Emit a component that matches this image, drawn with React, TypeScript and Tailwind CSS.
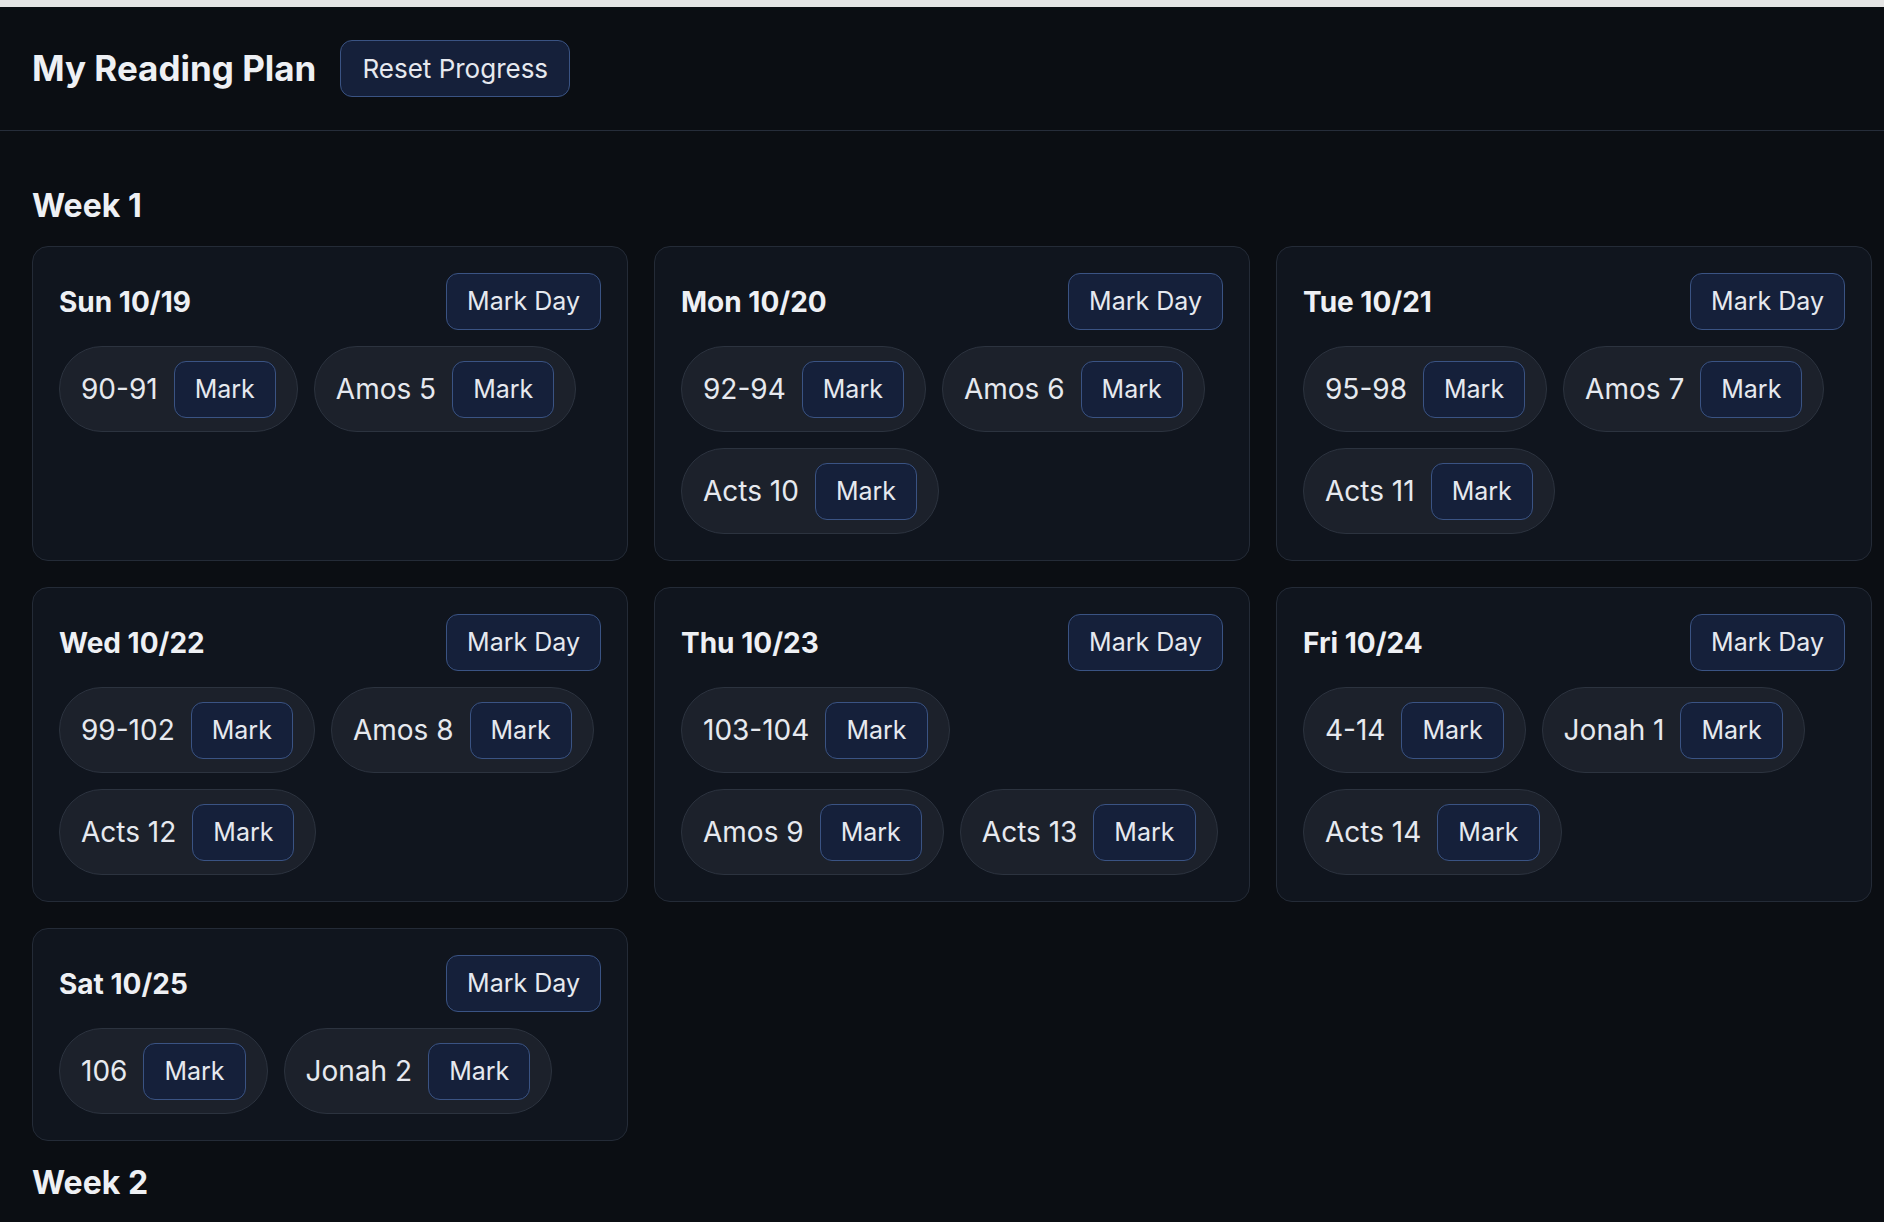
import React from 'react';

type Day = { label: string; readings: string[] };
type Week = { title: string; days: Day[] };

const weeks: Week[] = [
  {
    title: 'Week 1',
    days: [
      { label: 'Sun 10/19', readings: ['90-91', 'Amos 5'] },
      { label: 'Mon 10/20', readings: ['92-94', 'Amos 6', 'Acts 10'] },
      { label: 'Tue 10/21', readings: ['95-98', 'Amos 7', 'Acts 11'] },
      { label: 'Wed 10/22', readings: ['99-102', 'Amos 8', 'Acts 12'] },
      { label: 'Thu 10/23', readings: ['103-104', 'Amos 9', 'Acts 13'] },
      { label: 'Fri 10/24', readings: ['4-14', 'Jonah 1', 'Acts 14'] },
      { label: 'Sat 10/25', readings: ['106', 'Jonah 2'] },
    ],
  },
  {
    title: 'Week 2',
    days: [
      { label: 'Sun 10/26', readings: ['107', 'Jonah 3'] },
      { label: 'Mon 10/27', readings: ['108-109', 'Jonah 4', 'Acts 15'] },
      { label: 'Tue 10/28', readings: ['110-112', 'Micah 1', 'Acts 16'] },
    ],
  },
];

const buttonClass =
  'flex h-[57px] shrink-0 items-center rounded-[12px] border border-[#3a5383] bg-[#15203a] px-[20px] text-[25px] leading-none text-[#e6e9ef]';

const ReadingChip: React.FC<{ name: string }> = ({ name }) => (
  <div className="flex h-[86px] items-center gap-[16px] rounded-full border border-[#2c333f] bg-[#1c212b] pl-[21px] pr-[21px]">
    <span className="text-[28px] leading-none text-[#e6e9ef]">{name}</span>
    <button className={buttonClass}>Mark</button>
  </div>
);

const DayCard: React.FC<{ day: Day }> = ({ day }) => (
  <div className="rounded-[16px] border border-[#242b37] bg-[#10151e] p-[26px]">
    <div className="flex items-center justify-between">
      <h3 className="text-[28px] font-bold leading-none text-[#eef0f4]">{day.label}</h3>
      <button className={buttonClass}>Mark Day</button>
    </div>
    <div className="mt-[16px] flex flex-wrap gap-[16px]">
      {day.readings.map((r) => (
        <ReadingChip key={r} name={r} />
      ))}
    </div>
  </div>
);

const App: React.FC = () => {
  return (
    <div className="min-h-screen bg-[#0b0e13] font-['Inter','Noto_Sans',sans-serif] text-[#e6e9ef]">
      <div className="h-[7px] bg-[#e5e5e5]" />
      <header className="flex h-[124px] items-center gap-[24px] border-b border-[#262d3a] pl-[32px]">
        <h1 className="text-[35px] font-bold leading-none text-[#eef0f4]">My Reading Plan</h1>
        <button className={buttonClass + ' px-[21px] text-[26px]'}>Reset Progress</button>
      </header>
      <main className="pb-[40px] pl-[32px] pr-[12px] pt-[57px]">
        {weeks.map((week, i) => (
          <section key={week.title} className={i > 0 ? 'mt-[24px]' : ''}>
            <h2 className="mb-[22px] text-[32px] font-bold leading-[36px] text-[#eef0f4]">{week.title}</h2>
            <div className="grid grid-cols-3 gap-[26px]">
              {week.days.map((d) => (
                <DayCard key={d.label} day={d} />
              ))}
            </div>
          </section>
        ))}
      </main>
    </div>
  );
};

export default App;
